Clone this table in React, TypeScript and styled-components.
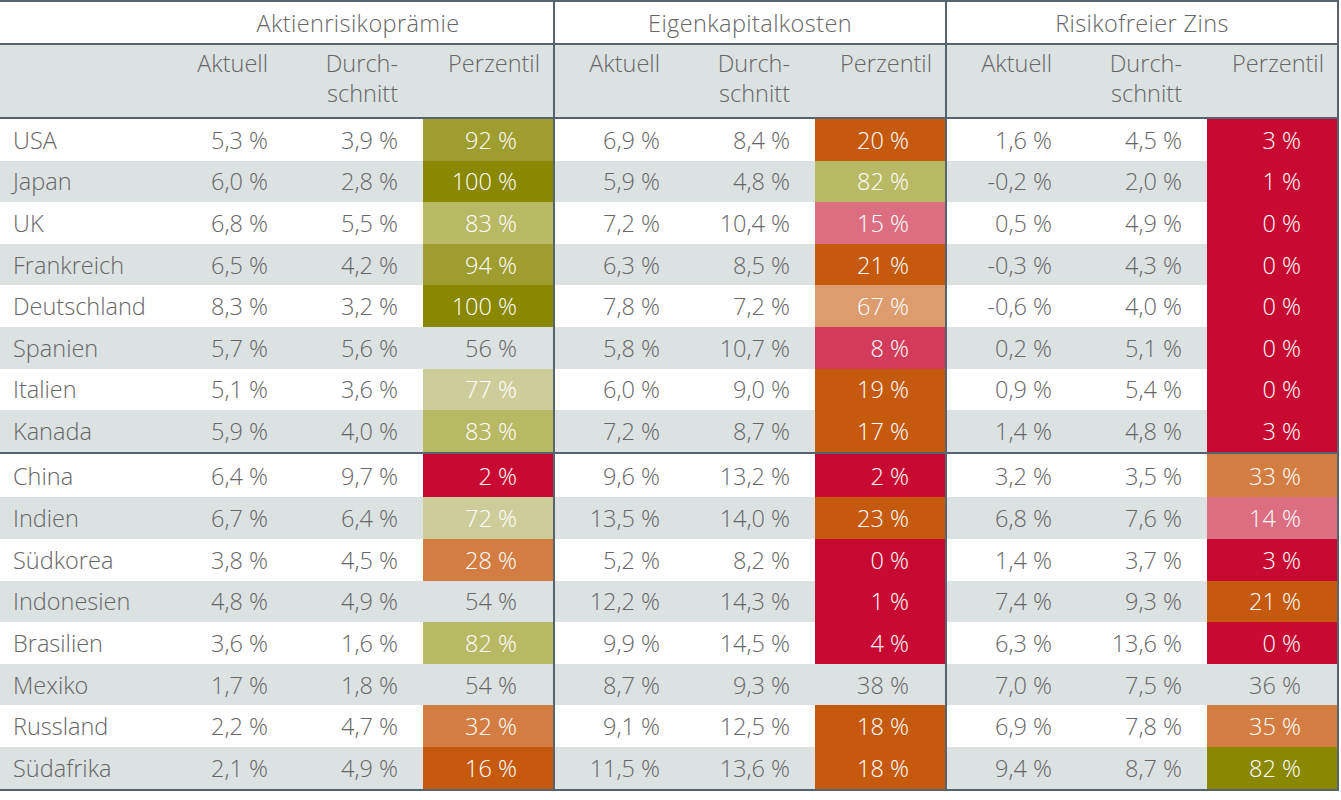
import React from "react";
import styled, { createGlobalStyle } from "styled-components";

const GlobalStyle = createGlobalStyle`
  body {
    margin: 0;
    background: #ffffff;
    font-family: "Open Sans", "Liberation Sans", sans-serif;
  }
`;

const LINE = "#55646e";
const GRAY = "#dce1e1";
const TEXT = "#666666";

const COLORS: Record<string, string> = {
  o1: "#8a8700",
  o2: "#a09d30",
  o3: "#b8b964",
  o4: "#cdcd9b",
  r: "#c80a32",
  p8: "#d23c5a",
  pk: "#dc6e82",
  do: "#c55a0f",
  lo: "#d37d43",
  pe: "#dc9c6e",
};

const Table = styled.div`
  width: 1339px;
  box-sizing: border-box;
  border-top: 2px solid ${LINE};
  border-bottom: 2px solid ${LINE};
  border-right: 2px solid ${LINE};
  color: ${TEXT};
  font-weight: 350;
  font-size: 23.5px;
`;

const Row = styled.div<{ $bg?: string; $h: number; $divider?: boolean }>`
  display: grid;
  grid-template-columns: 163px 130px 130px 130px 132px 130px 130px 132px 130px 130px;
  height: ${(p) => p.$h}px;
  background: ${(p) => p.$bg || "#ffffff"};
  border-top: ${(p) => (p.$divider ? `2px solid ${LINE}` : "none")};
`;

const GroupTitle = styled.div<{ $first?: boolean }>`
  grid-column: span 3;
  display: flex;
  align-items: center;
  justify-content: center;
  border-left: ${(p) => (p.$first ? "none" : `2px solid ${LINE}`)};
  border-bottom: 2px solid ${LINE};
  letter-spacing: 0.4px;
`;

const Corner = styled.div`
  border-bottom: 2px solid ${LINE};
`;

const HeadCell = styled.div<{ $left?: boolean; $pct?: boolean }>`
  text-align: right;
  padding: 3px ${(p) => (p.$pct ? 13 : 25)}px 0 0;
  line-height: 30px;
  border-left: ${(p) => (p.$left ? `2px solid ${LINE}` : "none")};
  border-bottom: 2px solid ${LINE};
`;

const Name = styled.div`
  display: flex;
  align-items: center;
  padding-left: 13px;
`;

const Value = styled.div<{ $left?: boolean }>`
  display: flex;
  align-items: center;
  justify-content: flex-end;
  padding-right: 25px;
  border-left: ${(p) => (p.$left ? `2px solid ${LINE}` : "none")};
`;

const Pct = styled.div<{ $color?: string }>`
  display: flex;
  align-items: center;
  justify-content: flex-end;
  padding-right: 36px;
  background: ${(p) => p.$color || "transparent"};
  color: ${(p) => (p.$color ? "#ffffff" : TEXT)};
`;

type Group = [string, string, number, string];
type Line = { name: string; g: Group[] };

const data: Line[] = [
  { name: "USA", g: [["5,3 %", "3,9 %", 92, "o2"], ["6,9 %", "8,4 %", 20, "do"], ["1,6 %", "4,5 %", 3, "r"]] },
  { name: "Japan", g: [["6,0 %", "2,8 %", 100, "o1"], ["5,9 %", "4,8 %", 82, "o3"], ["-0,2 %", "2,0 %", 1, "r"]] },
  { name: "UK", g: [["6,8 %", "5,5 %", 83, "o3"], ["7,2 %", "10,4 %", 15, "pk"], ["0,5 %", "4,9 %", 0, "r"]] },
  { name: "Frankreich", g: [["6,5 %", "4,2 %", 94, "o2"], ["6,3 %", "8,5 %", 21, "do"], ["-0,3 %", "4,3 %", 0, "r"]] },
  { name: "Deutschland", g: [["8,3 %", "3,2 %", 100, "o1"], ["7,8 %", "7,2 %", 67, "pe"], ["-0,6 %", "4,0 %", 0, "r"]] },
  { name: "Spanien", g: [["5,7 %", "5,6 %", 56, ""], ["5,8 %", "10,7 %", 8, "p8"], ["0,2 %", "5,1 %", 0, "r"]] },
  { name: "Italien", g: [["5,1 %", "3,6 %", 77, "o4"], ["6,0 %", "9,0 %", 19, "do"], ["0,9 %", "5,4 %", 0, "r"]] },
  { name: "Kanada", g: [["5,9 %", "4,0 %", 83, "o3"], ["7,2 %", "8,7 %", 17, "do"], ["1,4 %", "4,8 %", 3, "r"]] },
  { name: "China", g: [["6,4 %", "9,7 %", 2, "r"], ["9,6 %", "13,2 %", 2, "r"], ["3,2 %", "3,5 %", 33, "lo"]] },
  { name: "Indien", g: [["6,7 %", "6,4 %", 72, "o4"], ["13,5 %", "14,0 %", 23, "do"], ["6,8 %", "7,6 %", 14, "pk"]] },
  { name: "Südkorea", g: [["3,8 %", "4,5 %", 28, "lo"], ["5,2 %", "8,2 %", 0, "r"], ["1,4 %", "3,7 %", 3, "r"]] },
  { name: "Indonesien", g: [["4,8 %", "4,9 %", 54, ""], ["12,2 %", "14,3 %", 1, "r"], ["7,4 %", "9,3 %", 21, "do"]] },
  { name: "Brasilien", g: [["3,6 %", "1,6 %", 82, "o3"], ["9,9 %", "14,5 %", 4, "r"], ["6,3 %", "13,6 %", 0, "r"]] },
  { name: "Mexiko", g: [["1,7 %", "1,8 %", 54, ""], ["8,7 %", "9,3 %", 38, ""], ["7,0 %", "7,5 %", 36, ""]] },
  { name: "Russland", g: [["2,2 %", "4,7 %", 32, "lo"], ["9,1 %", "12,5 %", 18, "do"], ["6,9 %", "7,8 %", 35, "lo"]] },
  { name: "Südafrika", g: [["2,1 %", "4,9 %", 16, "do"], ["11,5 %", "13,6 %", 18, "do"], ["9,4 %", "8,7 %", 82, "o1"]] },
];

const groups = ["Aktienrisikoprämie", "Eigenkapitalkosten", "Risikofreier Zins"];

export default function App() {
  return (
    <>
      <GlobalStyle />
      <Table>
        <Row $h={43}>
          <Corner />
          {groups.map((t, i) => (
            <GroupTitle key={t} $first={i === 0}>
              {t}
            </GroupTitle>
          ))}
        </Row>
        <Row $h={74} $bg={GRAY}>
          <Corner />
          {groups.map((t, i) => (
            <React.Fragment key={t}>
              <HeadCell $left={i > 0}>Aktuell</HeadCell>
              <HeadCell>
                Durch-
                <br />
                schnitt
              </HeadCell>
              <HeadCell $pct>Perzentil</HeadCell>
            </React.Fragment>
          ))}
        </Row>
        {data.map((d, i) => (
          <Row
            key={d.name}
            $h={i === 8 ? 43.6 : 41.6}
            $divider={i === 8}
            $bg={i % 2 ? GRAY : "#ffffff"}
          >
            <Name>{d.name}</Name>
            {d.g.map(([a, b, p, c], j) => (
              <React.Fragment key={j}>
                <Value $left={j > 0}>{a}</Value>
                <Value>{b}</Value>
                <Pct $color={COLORS[c]}>{p} %</Pct>
              </React.Fragment>
            ))}
          </Row>
        ))}
      </Table>
    </>
  );
}
